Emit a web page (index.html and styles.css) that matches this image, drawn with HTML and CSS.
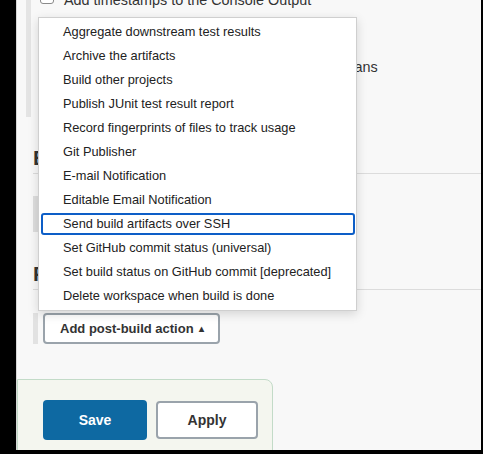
FILE: index.html
```html
<!DOCTYPE html>
<html lang="en">
<head>
<meta charset="utf-8">
<title>Post-build Actions</title>
<link rel="stylesheet" href="styles.css">
</head>
<body>
<div class="frame">
  <div class="panel">
    <div class="content">
      <div class="env-block">
        <label class="check-row first-row">
          <span class="checkbox"></span>
          <span class="check-label">Add timestamps to the Console Output</span>
        </label>
        <label class="check-row second-row">
          <span class="checkbox"></span>
          <span class="check-label">Inspect build log for published Gradle build scans</span>
        </label>
      </div>

      <section class="section build-section">
        <h2 class="section-title">Build</h2>
        <div class="step-block"></div>
      </section>

      <section class="section post-section">
        <h2 class="section-title">Post-build Actions</h2>
        <div class="action-row">
          <span class="side-bar"></span>
          <button class="btn-add" type="button">Add post-build action <span class="caret">&#9652;</span></button>
        </div>
      </section>
    </div>

    <div class="bottom-bar">
      <button class="btn btn-save" type="button">Save</button>
      <button class="btn btn-apply" type="button">Apply</button>
    </div>

    <ul class="dropdown">
      <li class="item">Aggregate downstream test results</li>
      <li class="item">Archive the artifacts</li>
      <li class="item">Build other projects</li>
      <li class="item">Publish JUnit test result report</li>
      <li class="item">Record fingerprints of files to track usage</li>
      <li class="item">Git Publisher</li>
      <li class="item">E-mail Notification</li>
      <li class="item">Editable Email Notification</li>
      <li class="item selected">Send build artifacts over SSH</li>
      <li class="item">Set GitHub commit status (universal)</li>
      <li class="item">Set build status on GitHub commit [deprecated]</li>
      <li class="item">Delete workspace when build is done</li>
    </ul>
  </div>
</div>
</body>
</html>
```

FILE: styles.css
```css
html, body {
  margin: 0;
  padding: 0;
}

body {
  background: #000;
  width: 483px;
  height: 454px;
  overflow: hidden;
  font-family: "Liberation Sans", Arial, Helvetica, sans-serif;
  color: #222;
}

.frame {
  padding-left: 16px;
  padding-right: 2px;
  padding-bottom: 4px;
}

.panel {
  position: relative;
  height: 450px;
  background: #f8f8f8;
  border-left: 1px solid #d6d6d6;
  overflow: hidden;
}

.content {
  display: flex;
  flex-direction: column;
}

/* build environment options (nested block) */
.env-block {
  margin-left: 9px;
  margin-top: -10px;
  height: 127px;
  border-left: 5px solid #e4e4e4;
  padding-left: 9px;
  box-sizing: border-box;
}

.check-row {
  display: flex;
  align-items: center;
  gap: 10px;
  height: 20px;
  font-size: 14.4px;
  color: #333;
}

.second-row {
  margin-top: 47px;
}

.checkbox {
  width: 12px;
  height: 12px;
  border: 1px solid #8a8a8a;
  border-radius: 3px;
  background: #fff;
  flex: none;
}

.first-row .checkbox {
  margin-top: -6px;
}

.section {
  margin-left: 16px;
  display: flex;
  flex-direction: column;
}

.section-title {
  margin: 0;
  font-size: 21px;
  line-height: 24px;
  font-weight: bold;
  color: #333;
  padding-bottom: 3px;
  border-bottom: 1px solid #dcdcdc;
}

.build-section {
  margin-top: 29px;
}

.step-block {
  margin-top: 22px;
  height: 36px;
  width: 5px;
  background: #dedede;
}

.post-section {
  margin-top: 30px;
}

.action-row {
  display: flex;
  align-items: stretch;
  gap: 5px;
  margin-top: 23px;
  height: 31px;
}

.side-bar {
  width: 5px;
  background: #e2e2e2;
}

.btn-add {
  width: 177px;
  height: 31px;
  margin: 0;
  padding: 0 0 0 15px;
  text-align: left;
  background: #fff;
  border: 2px solid #9aa3ab;
  border-radius: 4px;
  font-family: inherit;
  font-size: 13px;
  font-weight: bold;
  color: #333;
}

.caret {
  font-size: 10px;
  margin-left: 2px;
  vertical-align: 1px;
}

/* bottom bar */
.bottom-bar {
  position: absolute;
  left: 0;
  top: 379px;
  width: 256px;
  height: 80px;
  box-sizing: border-box;
  background: #f4f6ef;
  border: 1px solid #c3dbc8;
  border-radius: 0 8px 0 0;
  display: flex;
  gap: 9px;
  padding: 20px 0 0 25px;
}

.btn {
  height: 40px;
  margin: 0;
  font-family: inherit;
  font-size: 14px;
  font-weight: bold;
  border-radius: 4px;
}

.btn-save {
  width: 104px;
  background: #0e69a2;
  color: #fff;
  border: none;
}

.btn-apply {
  width: 102px;
  height: 38px;
  margin-top: 1px;
  background: #fff;
  color: #333;
  border: 2px solid #9aa3ab;
}

/* dropdown menu */
.dropdown {
  position: absolute;
  left: 21px;
  top: 17px;
  width: 319px;
  height: 294px;
  box-sizing: border-box;
  margin: 0;
  padding: 2px 0 3px;
  list-style: none;
  background: #fff;
  border: 1px solid #cfcfcf;
  box-shadow: 0 3px 10px rgba(0, 0, 0, 0.15);
}

.item {
  height: 24px;
  line-height: 24px;
  padding-left: 24px;
  font-size: 12.8px;
  color: #222;
  white-space: nowrap;
  box-sizing: border-box;
}

.item.selected {
  margin: 1px 1px 1px 2px;
  height: 22px;
  line-height: 18px;
  padding-left: 20px;
  border: 2px solid #0d5ec7;
  border-radius: 3px;
}
```
